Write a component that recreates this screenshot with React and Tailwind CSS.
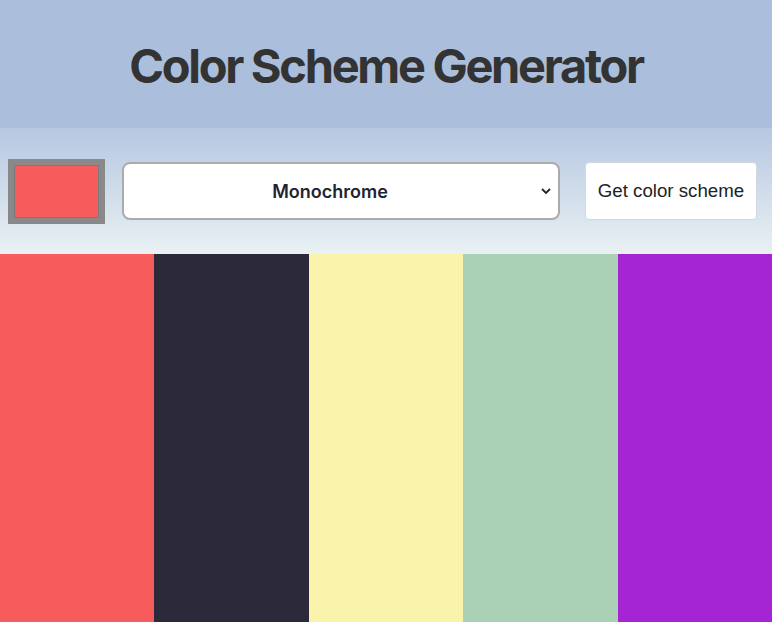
import React, { useState } from "react";

const colors = ["#f75c5c", "#2c2a3a", "#faf3ab", "#aad0b5", "#a524d4"];

const App = () => {
  const [mode, setMode] = useState("monochrome");

  return (
    <div className="w-[772px] h-[622px] flex flex-col overflow-hidden font-['Inter',sans-serif]">
      <header className="h-[128px] bg-[#abbfdc] flex items-center justify-center">
        <h1 className="text-[47px] font-bold text-[#333333] tracking-[-2.3px] pt-[4px]">
          Color Scheme Generator
        </h1>
      </header>

      <div className="h-[126px] bg-gradient-to-b from-[#b6c7e1] to-[#e9f1f3] flex items-center pl-[8px] pr-[15px]">
        <div className="w-[97px] h-[65px] bg-[#898989] p-[6px] shrink-0">
          <div className="w-full h-full bg-[#f75c5c] border border-[#7a7a7a]" />
        </div>

        <div className="relative ml-[17px] w-[438px] h-[58px] shrink-0">
          <select
            value={mode}
            onChange={(e) => setMode(e.target.value)}
            className="appearance-none w-full h-full bg-white border-2 border-[#ababab] rounded-[8px] text-center text-[18px] font-semibold text-[#1f2430] outline-none pr-[22px]"
          >
            <option value="monochrome">Monochrome</option>
            <option value="monochrome-dark">Monochrome Dark</option>
            <option value="complement">Complement</option>
            <option value="triad">Triad</option>
          </select>
          <svg
            className="absolute right-[8px] top-1/2 -translate-y-1/2 pointer-events-none"
            width="12"
            height="12"
            viewBox="0 0 12 12"
          >
            <path d="M2 4l4 4 4-4" fill="none" stroke="#222" strokeWidth="1.8" />
          </svg>
        </div>

        <button className="ml-[25px] w-[172px] h-[58px] shrink-0 bg-white border border-[#d3d7df] rounded-[4px] text-[18.7px] text-[#222] font-['Liberation_Sans',Arial,sans-serif]">
          Get color scheme
        </button>
      </div>

      <div className="flex-1 grid grid-cols-5">
        {colors.map((c) => (
          <div key={c} style={{ backgroundColor: c }} />
        ))}
      </div>
    </div>
  );
};

export default App;
